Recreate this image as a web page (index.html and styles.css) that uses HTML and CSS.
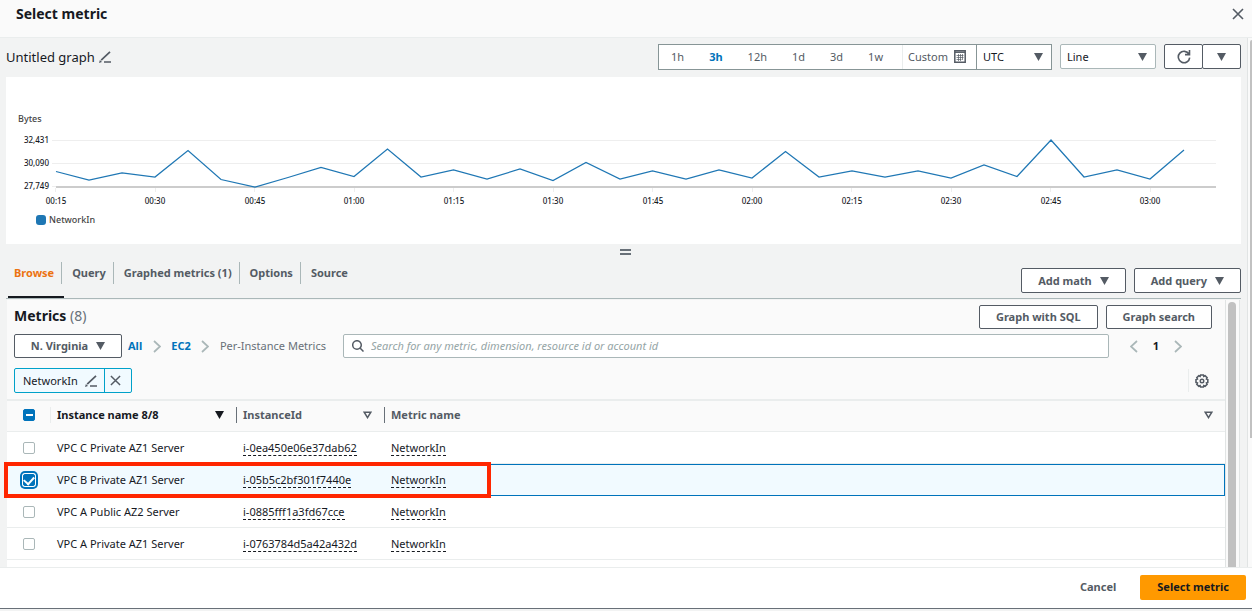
FILE: index.html
```html
<!DOCTYPE html>
<html lang="en">
<head>
    <meta charset="UTF-8">
    <meta name="viewport" content="width=device-width, initial-scale=1.0">
    <title>Select metric</title>
    <link rel="stylesheet" href="styles.css">
</head>
<body>
    <svg class="sprite" width="0" height="0" aria-hidden="true">
        <symbol id="caret" viewBox="0 0 9 8"><path d="M0 0h9L4.5 8z" fill="currentColor"/></symbol>
        <symbol id="caret-open" viewBox="0 0 9 8"><path d="M1.2 1.2h6.6L4.5 6.6z" fill="none" stroke="currentColor" stroke-width="1.5"/></symbol>
        <symbol id="close" viewBox="0 0 12 12"><path d="M1 1l10 10M11 1L1 11" fill="none" stroke="currentColor" stroke-width="1.6"/></symbol>
        <symbol id="pencil" viewBox="0 0 12 12"><path d="M5 11H12M2.200 9.200L11 .8" fill="none" stroke="currentColor" stroke-width="1.700"/><path d="M0 12l.9-3.100 2.100 2z" fill="currentColor"/></symbol>
        <symbol id="chevron" viewBox="0 0 8 13"><path d="M1 1l6 5.500L1 12" fill="none" stroke="currentColor" stroke-width="1.700"/></symbol>
    </svg>

    <header class="header">
        <h1>Select metric</h1>
        <button class="icon-button" aria-label="Close"><svg width="12" height="12"><use href="#close"/></svg></button>
    </header>

    <div class="body">
        <main class="content">
            <div class="toolbar">
                <h2 class="graph-title">Untitled graph</h2>
                <button class="icon-button" aria-label="Edit title"><svg width="12" height="12"><use href="#pencil"/></svg></button>
                <div class="time-range">
                    <div class="ranges">
                        <button>1h</button>
                        <button class="active">3h</button>
                        <button>12h</button>
                        <button>1d</button>
                        <button>3d</button>
                        <button>1w</button>
                    </div>
                    <button class="custom">Custom
                        <svg width="12" height="13" viewBox="0 0 12 13"><path d="M.8.8h10.4v11.400H.8z" fill="#fff" stroke="currentColor" stroke-width="1.500"/><path d="M1 2.200h10" stroke="currentColor" stroke-width="1.500"/><path d="M2.500 5.500h7M2.500 7.500h7M2.500 9.500h5M4.500 4v7M6.500 4v7M8.500 4v6" stroke="currentColor" stroke-width=".7"/></svg>
                    </button>
                    <div class="select timezone">
                        <select aria-label="Time zone"><option>UTC</option></select>
                        <svg width="9" height="8"><use href="#caret"/></svg>
                    </div>
                </div>
                <div class="select chart-type">
                    <select aria-label="Chart type"><option>Line</option></select>
                    <svg width="9" height="8"><use href="#caret"/></svg>
                </div>
                <div class="refresh">
                    <button aria-label="Refresh"><svg width="14" height="14" viewBox="0 0 14 14"><path d="M12 4.200A5.700 5.700 0 1 0 12.700 7.600M12.500 0v4.600H8" fill="none" stroke="currentColor" stroke-width="1.600"/></svg></button>
                    <button aria-label="Refresh options"><svg width="9" height="8"><use href="#caret"/></svg></button>
                </div>
            </div>

            <section class="chart">
                <svg viewBox="0 0 1235 167" role="img" aria-label="NetworkIn, bytes">
                    <text class="unit" x="12" y="45">Bytes</text>
                    <g class="y-labels">
                        <text x="43" y="66">32,431</text>
                        <text x="43" y="89">30,090</text>
                        <text x="43" y="112">27,749</text>
                    </g>
                    <path class="grid" d="M46 63.5H1210M46 86.5H1210M46 109.5H50"/>
                    <path class="grid" d="M49.5 111v4M149.5 111v4M248.5 111v4M348.5 111v4M447.5 111v4M547.5 111v4M646.5 111v4M746.5 111v4M845.5 111v4M945.5 111v4M1044.5 111v4M1144.5 111v4"/>
                    <path class="axis" d="M50 110H1210"/>
                    <polyline class="series" points="50,94.5 83,103 116,96 149,100 182,73.5 215,102.5 249,110 282,100.5 315,90.5 348,99.5 381.5,72 415,100 447.5,93 481,102 514,92 547,103.5 580,85.5 614,102 646.5,94 680,102 713,93 746,101 779.5,74.5 813,100 846,94 879,100 912,94 945,101 978,88 1011,99.5 1045,63 1078,100 1111,93 1144,102 1178,73"/>
                    <g class="x-labels">
                        <text x="50" y="127">00:15</text>
                        <text x="149" y="127">00:30</text>
                        <text x="249" y="127">00:45</text>
                        <text x="348" y="127">01:00</text>
                        <text x="448" y="127">01:15</text>
                        <text x="547" y="127">01:30</text>
                        <text x="647" y="127">01:45</text>
                        <text x="746" y="127">02:00</text>
                        <text x="846" y="127">02:15</text>
                        <text x="945" y="127">02:30</text>
                        <text x="1045" y="127">02:45</text>
                        <text x="1144" y="127">03:00</text>
                    </g>
                    <rect class="legend-key" x="30" y="138" width="10" height="10" rx="3"/>
                    <text class="unit" x="43" y="146">NetworkIn</text>
                </svg>
            </section>

            <div class="resize-handle"><span></span></div>

            <div class="tab-bar">
                <nav class="tabs">
                    <a href="#" class="active"><span>Browse</span></a>
                    <a href="#"><span>Query</span></a>
                    <a href="#"><span>Graphed metrics (1)</span></a>
                    <a href="#"><span>Options</span></a>
                    <a href="#"><span>Source</span></a>
                </nav>
                <div class="tab-actions">
                    <button class="button">Add math <svg width="9" height="8"><use href="#caret"/></svg></button>
                    <button class="button">Add query <svg width="9" height="8"><use href="#caret"/></svg></button>
                </div>
            </div>

            <div class="browser">
                <section class="panel">
                    <div class="panel-title">
                        <h2>Metrics <span>(8)</span></h2>
                        <button class="button">Graph with SQL</button>
                        <button class="button">Graph search</button>
                    </div>
                    <div class="panel-search">
                        <button class="button region">N. Virginia <svg width="9" height="8"><use href="#caret"/></svg></button>
                        <nav class="breadcrumbs">
                            <a href="#">All</a>
                            <svg width="8" height="13"><use href="#chevron"/></svg>
                            <a href="#">EC2</a>
                            <svg width="8" height="13"><use href="#chevron"/></svg>
                            <span>Per-Instance Metrics</span>
                        </nav>
                        <label class="search">
                            <svg width="12" height="12" viewBox="0 0 12 12"><path d="M8.500 8.500l3 3M9.300 5A4.300 4.300 0 1 1 .7 5a4.300 4.300 0 0 1 8.600 0z" fill="none" stroke="currentColor" stroke-width="1.500"/></svg>
                            <input type="text" aria-label="Search metrics" placeholder="Search for any metric, dimension, resource id or account id">
                        </label>
                        <div class="pager">
                            <button aria-label="Previous page"><svg class="flip" width="8" height="13"><use href="#chevron"/></svg></button>
                            <span>1</span>
                            <button aria-label="Next page"><svg width="8" height="13"><use href="#chevron"/></svg></button>
                        </div>
                    </div>
                    <div class="panel-filters">
                        <div class="token">
                            <button>NetworkIn <svg width="12" height="12"><use href="#pencil"/></svg></button>
                            <button aria-label="Remove filter"><svg width="11" height="11"><use href="#close"/></svg></button>
                        </div>
                        <button class="settings" aria-label="Settings">
                            <svg width="14" height="14" viewBox="0 0 14 14" fill="none" stroke="currentColor"><path d="M5.600 1h2.800l.4 1.300 1.300-.6 2 2-.6 1.300 1.300.5v3l-1.300.5.6 1.300-2 2-1.300-.6-.4 1.300H5.600l-.5-1.300-1.300.6-2-2 .6-1.300L1 8.500v-3L2.400 5l-.6-1.300 2-2 1.300.6z" stroke-width="1.600"/><circle cx="7" cy="7" r="1.800" stroke-width="1.400"/></svg>
                        </button>
                    </div>

                    <table class="metrics">
                        <colgroup>
                            <col class="col-check">
                            <col class="col-name">
                            <col class="col-id">
                            <col>
                        </colgroup>
                        <thead>
                            <tr>
                                <th><input type="checkbox" class="some" aria-label="Select all"></th>
                                <th class="sorted"><div>Instance name 8/8 <svg width="9" height="8"><use href="#caret"/></svg></div></th>
                                <th><div>InstanceId <svg width="9" height="8"><use href="#caret-open"/></svg></div></th>
                                <th><div>Metric name <svg width="9" height="8"><use href="#caret-open"/></svg></div></th>
                            </tr>
                        </thead>
                        <tbody>
                            <tr>
                                <td><input type="checkbox" aria-label="VPC C Private AZ1 Server"></td>
                                <td>VPC C Private AZ1 Server</td>
                                <td><span class="term">i-0ea450e06e37dab62</span></td>
                                <td><span class="term">NetworkIn</span></td>
                            </tr>
                            <tr class="selected">
                                <td><input type="checkbox" aria-label="VPC B Private AZ1 Server" checked><span class="highlight"></span></td>
                                <td>VPC B Private AZ1 Server</td>
                                <td><span class="term">i-05b5c2bf301f7440e</span></td>
                                <td><span class="term">NetworkIn</span></td>
                            </tr>
                            <tr>
                                <td><input type="checkbox" aria-label="VPC A Public AZ2 Server"></td>
                                <td>VPC A Public AZ2 Server</td>
                                <td><span class="term">i-0885fff1a3fd67cce</span></td>
                                <td><span class="term">NetworkIn</span></td>
                            </tr>
                            <tr>
                                <td><input type="checkbox" aria-label="VPC A Private AZ1 Server"></td>
                                <td>VPC A Private AZ1 Server</td>
                                <td><span class="term">i-0763784d5a42a432d</span></td>
                                <td><span class="term">NetworkIn</span></td>
                            </tr>
                        </tbody>
                    </table>
                </section>
                <div class="panel-scroll"><span></span></div>
            </div>
        </main>
        <div class="page-scroll"><span></span></div>
    </div>

    <footer class="footer">
        <button class="cancel">Cancel</button>
        <button class="primary">Select metric</button>
    </footer>
</body>
</html>
```

FILE: styles.css
```css
* {
    box-sizing: border-box;
}

body {
    margin: 0;
    height: 100vh;
    padding-bottom: 2px;
    display: flex;
    flex-direction: column;
    font: 11px/16px "Noto Sans", "Open Sans", sans-serif;
    color: #16191f;
    background-color: #f2f3f3;
    overflow: hidden;
}

h1, h2 {
    margin: 0;
    font-size: 14px;
    line-height: 20px;
}

button, input, select {
    font: inherit;
    color: #545b64;
    margin: 0;
}

button {
    display: flex;
    align-items: center;
    justify-content: center;
    padding: 0;
    border: none;
    background: none;
    white-space: nowrap;
    cursor: pointer;
}

svg {
    display: block;
    flex: none;
}

a {
    color: #0073bb;
    text-decoration: none;
}

.sprite {
    position: absolute;
}

.header {
    flex: none;
    height: 38px;
    padding: 0 8px 10px 16px;
    display: flex;
    align-items: center;
    justify-content: space-between;
    background-color: #fafafa;
    border-bottom: 1px solid #eaeded;
}

.body {
    flex: 1;
    min-height: 0;
    display: flex;
    overflow: hidden;
}

.content {
    flex: 1;
    min-width: 0;
    padding: 0 6px;
    display: flex;
    flex-direction: column;
}

.page-scroll {
    width: 5px;
    padding: 2px 0 0 2px;
    background-color: #fafafa;
    border-left: 1px solid #e1e4e4;
}

.page-scroll span {
    display: block;
    height: 398px;
    background-color: #c1c1c1;
    border-radius: 3px 0 0 0;
}

/* toolbar */
.toolbar {
    flex: none;
    height: 39px;
    padding-bottom: 2px;
    display: flex;
    align-items: center;
    gap: 8px;
}

.graph-title {
    font-size: 13px;
    font-weight: 400;
}

.toolbar .icon-button {
    margin-left: -4px;
}

.time-range {
    height: 26px;
    margin-left: auto;
    display: flex;
    background-color: #fff;
    border: 1px solid #879596;
}

.ranges {
    display: flex;
    align-items: center;
}

.ranges button {
    padding: 0 13px 0 12px;
}

.ranges .active {
    color: #0073bb;
    font-weight: 700;
}

.ranges button:last-child {
    padding-right: 19px;
}

.custom {
    padding: 0 10px 0 5px;
    gap: 6px;
    border-left: 1px solid #eaeded;
}

.select {
    display: grid;
    align-items: center;
    color: #545b64;
    background-color: #fff;
}

.select select,
.select svg {
    grid-area: 1 / 1;
}

.select select {
    width: 100%;
    height: 100%;
    padding: 0 6px;
    border: none;
    background: none;
    appearance: none;
    color: #16191f;
}

.select svg {
    justify-self: end;
    margin-right: 8px;
    pointer-events: none;
}

.timezone {
    width: 75px;
    border-left: 1px solid #879596;
}

.chart-type {
    width: 96px;
    height: 25px;
    border: 1px solid #aab7b8;
    border-radius: 2px;
}

.refresh {
    display: flex;
    color: #545b64;
}

.refresh button {
    width: 39px;
    height: 25px;
    background-color: #fff;
    border: 1px solid #545b64;
    border-radius: 2px;
}

.refresh button + button {
    margin-left: -1px;
}

/* chart */
.chart {
    flex: none;
    background-color: #fff;
}

.chart svg {
    width: 100%;
    height: auto;
}

.chart text {
    font-size: 8px;
    font-weight: 500;
    fill: #16191f;
}

.chart .unit {
    font-size: 9px;
    fill: #444;
}

.y-labels {
    text-anchor: end;
}

.x-labels {
    text-anchor: middle;
}

.grid {
    fill: none;
    stroke: #eee;
}

.axis {
    stroke: #ccc;
    stroke-width: 2;
}

.series {
    fill: none;
    stroke: #1f77b4;
    stroke-width: 1.25;
}

.legend-key {
    fill: #1f77b4;
}

.resize-handle {
    flex: none;
    height: 16px;
    padding-left: 4px;
    display: flex;
    align-items: center;
    justify-content: center;
}

.resize-handle span {
    width: 11px;
    height: 6px;
    border: solid #687078;
    border-width: 2px 0;
}

/* tabs */
.tab-bar {
    flex: none;
    height: 39px;
    display: flex;
    justify-content: space-between;
    border-bottom: 1px solid #aab7b8;
}

.tabs {
    display: flex;
    padding-left: 2px;
}

.tabs a {
    padding-top: 2px;
    color: #545b64;
    font-weight: 700;
}

.tabs span {
    display: block;
    padding: 3px 7px 3px 10px;
    border-right: 1px solid #aab7b8;
}

.tabs a:first-child span {
    padding-left: 6px;
}

.tabs a:last-child span {
    border: none;
}

.tabs .active {
    padding-right: 2px;
    margin-right: -2px;
    color: #ec7211;
    border-bottom: 2px solid #16191f;
}

.tab-actions {
    display: flex;
    gap: 8px;
    padding-top: 8px;
}

.button {
    height: 24px;
    padding: 0 16px;
    gap: 8px;
    font-weight: 700;
    background-color: #fff;
    border: 1px solid #545b64;
    border-radius: 2px;
}

.tab-actions .button {
    height: 25px;
}

/* metrics browser */
.browser {
    flex: 1;
    min-height: 0;
    margin: 1px 1px 0;
    display: flex;
}

.panel {
    flex: 1;
    min-width: 0;
    background-color: #fff;
    border-right: 1px solid #e1e4e4;
}

.panel-title,
.panel-search,
.panel-filters {
    background-color: #fafafa;
}

.panel-scroll {
    width: 14px;
    padding: 2px 3px 0 2px;
    background-color: #fafafa;
    border-right: 1px solid #e1e4e4;
}

.panel-scroll span {
    display: block;
    height: 100%;
    background-color: #c1c1c1;
    border-radius: 4px 4px 0 0;
}

.panel-title {
    display: flex;
    gap: 8px;
    align-items: center;
    padding: 5px 13px 5px 7px;
}

.panel-title h2 {
    flex: 1;
    padding-bottom: 2px;
}

.panel-title h2 span {
    color: #687078;
    font-weight: 400;
}

.panel-search {
    display: flex;
    align-items: center;
    padding: 0 43px 0 7px;
}

.region {
    width: 108px;
    padding: 0;
}

.breadcrumbs {
    width: 221px;
    padding: 0 17px 0 6px;
    display: flex;
    align-items: center;
    justify-content: space-between;
    white-space: nowrap;
    color: #687078;
}

.breadcrumbs a {
    font-weight: 700;
}

.breadcrumbs svg,
.pager svg {
    color: #aab7b8;
}

.search {
    flex: 1;
    height: 24px;
    padding: 0 8px;
    display: flex;
    align-items: center;
    gap: 7px;
    color: #545b64;
    background-color: #fff;
    border: 1px solid #aab7b8;
    border-radius: 2px;
}

.search input {
    flex: 1;
    padding: 0;
    border: none;
    background: none;
}

.search input::placeholder {
    color: #95a5a6;
    font-style: italic;
}

.pager {
    display: flex;
    align-items: center;
    gap: 15px;
    padding-left: 21px;
    font-weight: 700;
}

.flip {
    transform: scaleX(-1);
}

.panel-filters {
    display: flex;
    justify-content: space-between;
    align-items: center;
    padding: 10px 16px 6px 7px;
}

.token {
    height: 25px;
    display: flex;
    background-color: #f1faff;
    border: 1px solid #00a1c9;
    border-radius: 2px;
}

.token button {
    padding: 0 7px 0 8px;
    gap: 7px;
}

.token button:first-child {
    color: #16191f;
}

.token svg {
    color: #545b64;
}

.token button + button {
    padding: 0 10px 0 5px;
    border-left: 1px solid #00a1c9;
}

.settings {
    height: 23px;
    padding-left: 6px;
    border-left: 1px solid #eaeded;
}

.metrics {
    width: 100%;
    table-layout: fixed;
    border-spacing: 0;
    border-top: 2px solid #eaeded;
}

.col-check {
    width: 43px;
}

.col-name {
    width: 186px;
}

.col-id {
    width: 148px;
}

.metrics th {
    height: 31px;
    padding: 0 0 2px;
    text-align: left;
    color: #545b64;
    background-color: #fafafa;
    border-bottom: 1px solid #eaeded;
}

.metrics th div {
    height: 16px;
    padding: 0 12px 0 6px;
    display: flex;
    align-items: center;
    justify-content: space-between;
    border-left: 1px solid #687078;
}

.metrics .sorted {
    color: #16191f;
}

.metrics .sorted div {
    border-left-color: #eaeded;
}

.metrics td {
    height: 32px;
    padding: 0 0 0 7px;
    border-bottom: 1px solid #eaeded;
}

.metrics th:first-child,
.metrics td:first-child {
    padding-left: 16px;
}

.metrics input {
    display: block;
    width: 12px;
    height: 12px;
    appearance: none;
    background-color: #fff;
    border: 1px solid #aab7b8;
    border-radius: 2px;
}

.metrics .some {
    border-color: #0073bb;
    background: linear-gradient(#fff, #fff) center / 7px 2px no-repeat #0073bb;
}

.selected td {
    background-color: #f1faff;
    border: solid #0073bb;
    border-width: 1px 0;
}

.selected td:first-child {
    position: relative;
    border-left-width: 1px;
    padding-left: 15px;
}

.selected td:last-child {
    border-right-width: 1px;
}

.selected input {
    display: grid;
    place-items: center;
    padding-bottom: 2px;
    background-color: #0073bb;
    border-color: #0073bb;
    box-shadow: 0 0 0 1px #fff, 0 0 0 3px #0073bb;
}

.selected input::after {
    content: "";
    width: 8px;
    height: 5px;
    border: solid #fff;
    border-width: 0 0 2px 2px;
    transform: rotate(-48deg);
}

.highlight {
    position: absolute;
    top: -3px;
    left: -4px;
    width: 487px;
    height: 36px;
    border: 4px solid #ff2600;
    pointer-events: none;
}

.term {
    border-bottom: 1px dashed #16191f;
}

/* footer */
.footer {
    flex: none;
    height: 42px;
    padding: 0 6px 2px 0;
    display: flex;
    align-items: center;
    justify-content: flex-end;
    gap: 24px;
    background-color: #fff;
    border-top: 1px solid #eaeded;
    border-bottom: 1px solid #687078;
}

.footer button {
    font-weight: 700;
}

.footer .primary {
    height: 25px;
    padding: 0 17px;
    color: #16191f;
    background-color: #ff9900;
    border-radius: 2px;
}
```
